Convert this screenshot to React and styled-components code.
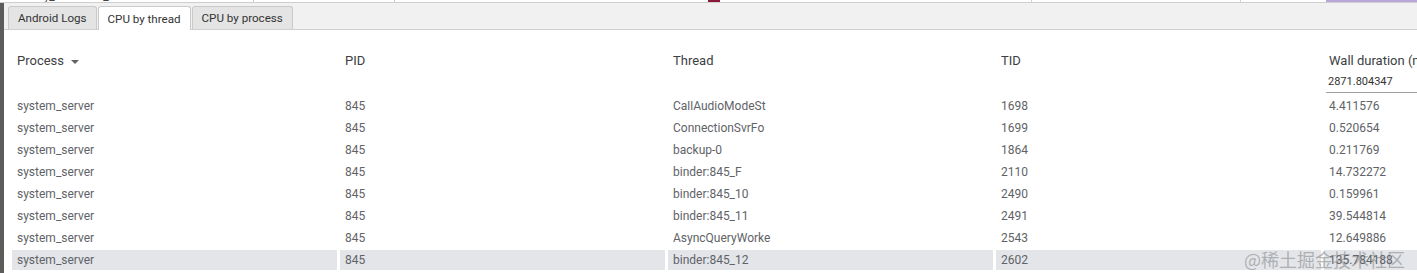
import styled, { createGlobalStyle } from "styled-components";

const GlobalStyle = createGlobalStyle`
  html, body {
    margin: 0;
    padding: 0;
    background: #ffffff;
    overflow: hidden;
  }
  body {
    font-family: Roboto, "Liberation Sans", sans-serif;
  }
`;

const Page = styled.div`
  position: relative;
  width: 1417px;
  height: 273px;
  overflow: hidden;
  display: flex;
  flex-direction: column;
`;

const TrackStrip = styled.div`
  height: 2px;
  display: flex;
  border-bottom: 1px solid #cfcfcf;
  overflow: hidden;
`;

const TrackSegment = styled.div`
  width: ${(p) => p.width}px;
  flex: ${(p) => (p.grow ? 1 : "none")};
  background: ${(p) => p.color || "#ffffff"};
  border-right: ${(p) => (p.divider ? "1px solid #cfcfcf" : "none")};
  overflow: hidden;
  font-size: 12px;
  line-height: 12px;
  color: #444;
  padding-left: 12px;
  box-sizing: border-box;
`;

const ClippedLabel = styled.div`
  margin-top: -10px;
  white-space: nowrap;
`;

const Body = styled.div`
  flex: 1;
  display: flex;
  min-height: 0;
`;

const SideBar = styled.div`
  width: 4px;
  background: #5c5c5c;
  flex: none;
`;

const Panel = styled.div`
  flex: 1;
  display: flex;
  flex-direction: column;
  min-width: 0;
`;

const TabBar = styled.div`
  height: 26px;
  background: #f1f1f1;
  border-bottom: 1px solid #cfcfcf;
  display: flex;
  align-items: flex-end;
  gap: 1px;
  padding-left: 4px;
`;

const Tab = styled.div`
  box-sizing: border-box;
  padding: 0 9px;
  display: flex;
  align-items: center;
  font-size: 11.6px;
  color: #333;
  background: ${(p) => (p.active ? "#ffffff" : "#e4e4e4")};
  border: 1px solid #cacaca;
  border-bottom: none;
  border-radius: 3px 3px 0 0;
  margin-bottom: ${(p) => (p.active ? "-1px" : "0")};
  height: ${(p) => (p.active ? "24px" : "23px")};
`;

const Table = styled.div`
  flex: 1;
  display: flex;
  flex-direction: column;
  padding-left: 8px;
  min-height: 0;
`;

const Grid = styled.div`
  display: grid;
  grid-template-columns: 325px 325px 325px 325px 1fr;
  column-gap: 3px;
`;

const HeaderRow = styled(Grid)`
  height: 71px;
  box-sizing: border-box;
  padding-top: 23px;
  background: #ffffff;
`;

const HeaderCell = styled.div`
  display: flex;
  flex-direction: column;
  padding-left: 5px;
`;

const HeaderLabel = styled.div`
  height: 16px;
  line-height: 16px;
  font-size: 13px;
  color: #3c4043;
  white-space: nowrap;
  display: flex;
  align-items: center;
  gap: 7px;
`;

const SortArrow = styled.span`
  width: 0;
  height: 0;
  border-left: 4px solid transparent;
  border-right: 4px solid transparent;
  border-top: 4px solid #5f6368;
  margin-top: 1px;
`;

const FilterInput = styled.div`
  margin-top: 2px;
  margin-left: -3px;
  height: 22px;
  box-sizing: border-box;
  border-bottom: 1px solid #a0a0a0;
  font-size: 11px;
  line-height: 21px;
  padding-left: 2px;
  color: #333;
  visibility: ${(p) => (p.hidden ? "hidden" : "visible")};
`;

const RowsViewport = styled.div`
  flex: 1;
  overflow: hidden;
`;

const Rows = styled.div`
  margin-top: -6px;
  display: flex;
  flex-direction: column;
`;

const Row = styled(Grid)`
  height: 22px;
  align-items: center;
`;

const Cell = styled.div`
  height: 20px;
  line-height: 20px;
  padding-left: 5px;
  font-size: 12px;
  color: #5f6368;
  white-space: nowrap;
  overflow: hidden;
  background: ${(p) => (p.selected ? "#e3e5e9" : "transparent")};
`;

const Watermark = styled.div`
  position: absolute;
  right: 12px;
  bottom: 4px;
  font-family: "Noto Sans CJK SC", sans-serif;
  font-size: 18px;
  line-height: 20px;
  color: rgba(120, 120, 120, 0.5);
  pointer-events: none;
`;

const columns = ["Process", "PID", "Thread", "TID", "Wall duration (ms)"];

const rows = [
  ["system_server", "845", "CallAudioModeSt", "1698", "4.411576"],
  ["system_server", "845", "ConnectionSvrFo", "1699", "0.520654"],
  ["system_server", "845", "backup-0", "1864", "0.211769"],
  ["system_server", "845", "binder:845_F", "2110", "14.732272"],
  ["system_server", "845", "binder:845_10", "2490", "0.159961"],
  ["system_server", "845", "binder:845_11", "2491", "39.544814"],
  ["system_server", "845", "AsyncQueryWorke", "2543", "12.649886"],
  ["system_server", "845", "binder:845_12", "2602", "135.784188"],
];

const selectedRow = 7;

export default function App() {
  return (
    <Page>
      <GlobalStyle />
      <TrackStrip>
        <TrackSegment width={254} divider>
          <ClippedLabel>battery_stats.wifi_scan</ClippedLabel>
        </TrackSegment>
        <TrackSegment width={141} divider />
        <TrackSegment width={313} />
        <TrackSegment width={2} color="#8b1a3a" />
        <TrackSegment width={312} divider />
        <TrackSegment width={209} divider />
        <TrackSegment width={85} />
        <TrackSegment grow color="#bba6dc" />
      </TrackStrip>
      <Body>
        <SideBar />
        <Panel>
          <TabBar>
            <Tab>Android Logs</Tab>
            <Tab active>CPU by thread</Tab>
            <Tab>CPU by process</Tab>
          </TabBar>
          <Table>
            <HeaderRow>
              {columns.map((c, i) => (
                <HeaderCell key={c}>
                  <HeaderLabel>
                    {c}
                    {i === 0 && <SortArrow />}
                  </HeaderLabel>
                  <FilterInput hidden={i !== 4}>2871.804347</FilterInput>
                </HeaderCell>
              ))}
            </HeaderRow>
            <RowsViewport>
              <Rows>
                {rows.map((r, i) => (
                  <Row key={i}>
                    {r.map((v, j) => (
                      <Cell key={j} selected={i === selectedRow}>
                        {v}
                      </Cell>
                    ))}
                  </Row>
                ))}
              </Rows>
            </RowsViewport>
          </Table>
        </Panel>
      </Body>
      <Watermark>@稀土掘金技术社区</Watermark>
    </Page>
  );
}
